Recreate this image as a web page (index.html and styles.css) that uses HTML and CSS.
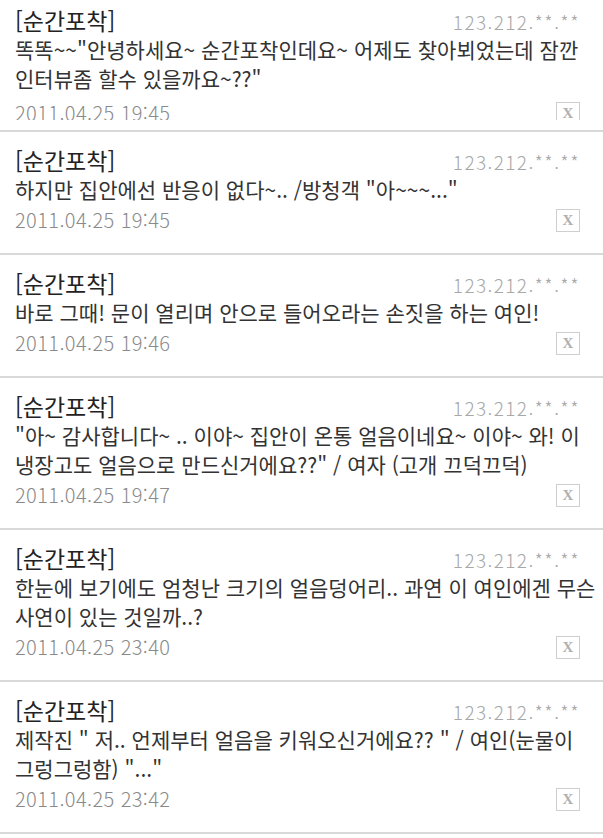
FILE: index.html
```html
<!DOCTYPE html>
<html lang="ko">
<head>
  <meta charset="UTF-8" />
  <title>순간포착 댓글</title>
  <link rel="stylesheet" href="styles.css">
</head>
<body>
  <div class="list">

    <div class="item cut">
      <div class="clip">
        <div class="head">
          <span class="title">[순간포착]</span>
          <span class="ip">123.212.**.**</span>
        </div>
        <p class="text">똑똑~~"안녕하세요~ 순간포착인데요~ 어제도 찾아뵈었는데 잠깐<br>인터뷰좀 할수 있을까요~??"</p>
        <div class="foot">
          <span class="date">2011.04.25 19:45</span>
          <span class="del">X</span>
        </div>
      </div>
    </div>

    <div class="item">
      <div class="head">
        <span class="title">[순간포착]</span>
        <span class="ip">123.212.**.**</span>
      </div>
      <p class="text">하지만 집안에선 반응이 없다~.. /방청객 "아~~~..."</p>
      <div class="foot">
        <span class="date">2011.04.25 19:45</span>
        <span class="del">X</span>
      </div>
    </div>

    <div class="item">
      <div class="head">
        <span class="title">[순간포착]</span>
        <span class="ip">123.212.**.**</span>
      </div>
      <p class="text">바로 그때! 문이 열리며 안으로 들어오라는 손짓을 하는 여인!</p>
      <div class="foot">
        <span class="date">2011.04.25 19:46</span>
        <span class="del">X</span>
      </div>
    </div>

    <div class="item">
      <div class="head">
        <span class="title">[순간포착]</span>
        <span class="ip">123.212.**.**</span>
      </div>
      <p class="text">"아~ 감사합니다~ .. 이야~ 집안이 온통 얼음이네요~ 이야~ 와! 이<br>냉장고도 얼음으로 만드신거에요??" / 여자 (고개 끄덕끄덕)</p>
      <div class="foot">
        <span class="date">2011.04.25 19:47</span>
        <span class="del">X</span>
      </div>
    </div>

    <div class="item">
      <div class="head">
        <span class="title">[순간포착]</span>
        <span class="ip">123.212.**.**</span>
      </div>
      <p class="text">한눈에 보기에도 엄청난 크기의 얼음덩어리.. 과연 이 여인에겐 무슨<br>사연이 있는 것일까..?</p>
      <div class="foot">
        <span class="date">2011.04.25 23:40</span>
        <span class="del">X</span>
      </div>
    </div>

    <div class="item">
      <div class="head">
        <span class="title">[순간포착]</span>
        <span class="ip">123.212.**.**</span>
      </div>
      <p class="text">제작진 " 저.. 언제부터 얼음을 키워오신거에요?? " / 여인(눈물이<br>그렁그렁함) "..."</p>
      <div class="foot">
        <span class="date">2011.04.25 23:42</span>
        <span class="del">X</span>
      </div>
    </div>

  </div>
</body>
</html>
```

FILE: styles.css
```css
body {
  margin: 0;
  background: #fff;
  font-family: "Noto Sans CJK KR", "Noto Sans", sans-serif;
  overflow: hidden;
}
.list {
  height: 838px;
  overflow: hidden;
}
.item {
  padding: 13px 23px 19px 15px;
  border-bottom: 2px solid #d9d9d9;
  background: #fff;
}
.item.cut {
  padding-top: 0;
  padding-bottom: 10px;
}
/* the first entry is cropped at the bottom in the capture */
.item.cut .clip {
  height: 120px;
  padding-top: 5px;
  box-sizing: border-box;
  overflow: hidden;
}
.item.cut .foot {
  margin-top: 4px;
}
.head {
  display: flex;
  justify-content: space-between;
  align-items: baseline;
  height: 30px;
}
.title {
  font-size: 23px;
  line-height: 30px;
  color: #222;
}
.ip {
  font-size: 19px;
  letter-spacing: 1.4px;
  color: #a8a8a8;
  font-weight: 300;
}
.text {
  margin: 0;
  font-size: 21px;
  line-height: 29px;
  color: #333;
  white-space: nowrap;
}
.foot {
  display: flex;
  justify-content: space-between;
  align-items: center;
  height: 30px;
}
.date {
  font-size: 20px;
  letter-spacing: 0.4px;
  color: #8a8a8a;
  font-weight: 300;
}
.del {
  width: 24px;
  height: 23px;
  margin-top: 2px;
  border: 1px solid #cfcfcf;
  box-sizing: border-box;
  display: flex;
  align-items: center;
  justify-content: center;
  font-family: "Liberation Serif", serif;
  font-weight: bold;
  font-size: 15px;
  line-height: 1;
  color: #b0b0b0;
}
```
